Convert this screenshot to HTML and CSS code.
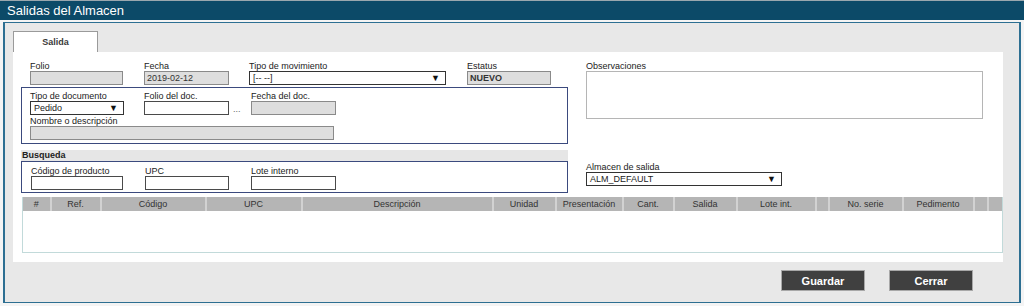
FILE: index.html
```html
<!DOCTYPE html>
<html lang="es">
<head>
    <meta charset="UTF-8">
    <title>Salidas del Almacen</title>
    <link rel="stylesheet" href="styles.css">
</head>
<body>
    <div id="title-bar">Salidas del Almacen</div>

    <div id="frame">
        <div class="tabs">
            <div class="tab">Salida</div>
        </div>
        <div id="panel">
            <div class="top">
                <div class="left">
                    <div class="row">
                        <div class="field w-folio">
                            <div class="lbl">Folio</div>
                            <div class="inp gray"></div>
                        </div>
                        <div class="field w-fecha">
                            <div class="lbl">Fecha</div>
                            <div class="inp gray">2019-02-12</div>
                        </div>
                        <div class="field w-mov">
                            <div class="lbl">Tipo de movimiento</div>
                            <div class="inp sel">[-- --]<span class="arrow">&#9660;</span></div>
                        </div>
                        <div class="field w-est">
                            <div class="lbl">Estatus</div>
                            <div class="inp gray bold">NUEVO</div>
                        </div>
                    </div>

                    <div class="box doc-box">
                        <div class="row">
                            <div class="field w-tipodoc">
                                <div class="lbl">Tipo de documento</div>
                                <div class="inp sel">Pedido<span class="arrow">&#9660;</span></div>
                            </div>
                            <div class="field w-foliodoc">
                                <div class="lbl">Folio del doc.</div>
                                <div class="inp white"></div>
                            </div>
                            <div class="dots">...</div>
                            <div class="field w-fechadoc">
                                <div class="lbl">Fecha del doc.</div>
                                <div class="inp gray"></div>
                            </div>
                        </div>
                        <div class="field w-nombre">
                            <div class="lbl">Nombre o descripción</div>
                            <div class="inp gray"></div>
                        </div>
                    </div>

                    <div class="band">Busqueda</div>
                    <div class="box search-box">
                        <div class="row">
                            <div class="field w-codigo">
                                <div class="lbl">Código de producto</div>
                                <div class="inp white"></div>
                            </div>
                            <div class="field w-upc">
                                <div class="lbl">UPC</div>
                                <div class="inp white"></div>
                            </div>
                            <div class="field w-lote">
                                <div class="lbl">Lote interno</div>
                                <div class="inp white"></div>
                            </div>
                        </div>
                    </div>
                </div>

                <div class="right">
                    <div class="lbl">Observaciones</div>
                    <div class="textarea"></div>
                    <div class="field w-alm">
                        <div class="lbl">Almacen de salida</div>
                        <div class="inp sel">ALM_DEFAULT<span class="arrow">&#9660;</span></div>
                    </div>
                </div>
            </div>

            <table class="grid">
                <colgroup>
                    <col style="width:28px"><col style="width:50px"><col style="width:105px">
                    <col style="width:96px"><col style="width:191px"><col style="width:63px">
                    <col style="width:67px"><col style="width:51px"><col style="width:63px">
                    <col style="width:79px"><col style="width:13px"><col style="width:74px">
                    <col style="width:71px"><col style="width:14px"><col style="width:15px">
                </colgroup>
                <thead>
                    <tr>
                        <th>#</th><th>Ref.</th><th>Código</th><th>UPC</th><th>Descripción</th>
                        <th>Unidad</th><th>Presentación</th><th>Cant.</th><th>Salida</th>
                        <th>Lote int.</th><th></th><th>No. serie</th><th>Pedimento</th><th></th><th></th>
                    </tr>
                </thead>
                <tbody>
                    <tr><td colspan="15"></td></tr>
                </tbody>
            </table>
        </div>

        <div class="actions">
            <button class="btn">Guardar</button>
            <button class="btn">Cerrar</button>
        </div>
    </div>
</body>
</html>
```

FILE: styles.css
```css
body {
    margin: 0;
    padding: 0;
    font-family: "Liberation Sans", Arial, sans-serif;
    font-size: 9px;
    color: #222;
    background: #f4f4f4;
}
#title-bar {
    height: 19px;
    border-top: 1px solid #9aa7ae;
    background: #0c4a68;
    color: #fff;
    font-size: 13px;
    line-height: 19px;
    padding-left: 7px;
}
#frame {
    margin: 2px 3px 0 3px;
    width: 1014px;
    height: 279px;
    border: 1px solid #2d6f92;
    border-left-width: 2px;
    border-right-width: 2px;
    background: #e8e8e8;
}
.tabs {
    display: flex;
    padding: 8px 0 0 8px;
}
.tab {
    width: 83px;
    height: 20px;
    background: #fff;
    border: 1px solid #9a9a9a;
    border-bottom: none;
    font-weight: bold;
    color: #3a3a3a;
    text-align: center;
    line-height: 20px;
}
#panel {
    margin-left: 8px;
    width: 990px;
    height: 210px;
    background: #fff;
    padding: 9px 0 0 8px;
    box-sizing: border-box;
}
.top {
    display: flex;
}
.left {
    width: 547px;
}
.right {
    margin-left: 18px;
    width: 398px;
}
.row {
    display: flex;
    align-items: flex-start;
}
.lbl {
    height: 10px;
    line-height: 10px;
    white-space: nowrap;
}
.inp {
    height: 14px;
    box-sizing: border-box;
    border: 1px solid #8a8a8a;
    line-height: 12px;
    padding-left: 2px;
    white-space: nowrap;
    position: relative;
}
.gray {
    background: #dedede;
    color: #333;
}
.white {
    background: #fff;
    border-color: #4a4a4a;
}
.sel {
    background: #fff;
    border-color: #333;
    padding-left: 3px;
}
.arrow {
    position: absolute;
    right: 5px;
    top: 0;
    font-size: 9px;
    color: #111;
}
.bold {
    font-weight: bold;
}
.left > .row {
    padding-left: 9px;
}
.w-folio { width: 93px; margin-right: 21px; }
.w-fecha { width: 85px; margin-right: 20px; }
.w-mov { width: 197px; margin-right: 21px; }
.w-est { width: 84px; }
.box {
    border: 1px solid #3b4a7e;
    padding: 3px 0 2px 8px;
}
.doc-box {
    margin-top: 2px;
    height: 51px;
    box-sizing: content-box;
    padding-top: 3px;
    padding-bottom: 1px;
}
.w-tipodoc { width: 94px; margin-right: 20px; }
.w-foliodoc { width: 85px; }
.dots {
    width: 22px;
    padding: 13px 0 0 4px;
    box-sizing: border-box;
    color: #666;
}
.w-fechadoc { width: 85px; }
.w-nombre {
    width: 304px;
    margin-top: 1px;
}
.band {
    margin-top: 6px;
    height: 11px;
    line-height: 11px;
    background: #e6e6e6;
    font-weight: bold;
    padding-left: 1px;
}
.search-box {
    padding: 4px 0 2px 9px;
}
.w-codigo { width: 92px; margin-right: 22px; }
.w-upc { width: 84px; margin-right: 22px; }
.w-lote { width: 85px; }
.textarea {
    width: 397px;
    height: 48px;
    box-sizing: border-box;
    border: 1px solid #b5b5b5;
}
.w-alm {
    width: 196px;
    margin-top: 43px;
}
.grid {
    margin: 4px 0 0 1px;
    width: 981px;
    border-collapse: collapse;
    table-layout: fixed;
    border: 1px solid #c2dada;
    border-top: none;
}
.grid th {
    height: 14px;
    padding: 0;
    background: #b5b5b5;
    border-right: 2px solid #d2d2d2;
    font-weight: normal;
    color: #333;
    text-align: center;
    overflow: hidden;
    white-space: nowrap;
}
.grid th:last-child {
    border-right: none;
}
.grid td {
    height: 41px;
    padding: 0;
}
.actions {
    display: flex;
    justify-content: flex-end;
    padding: 8px 46px 0 0;
}
.btn {
    width: 84px;
    height: 21px;
    margin-left: 24px;
    background: #404040;
    border: 1px solid #a8a8a8;
    color: #fff;
    font-family: "Liberation Sans", Arial, sans-serif;
    font-size: 11px;
    font-weight: bold;
    padding: 0;
}
```
